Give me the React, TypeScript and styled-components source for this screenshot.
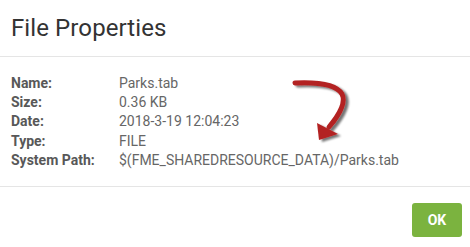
import { Fragment } from 'react';
import styled, { createGlobalStyle } from 'styled-components';

const GlobalStyle = createGlobalStyle`
  html, body {
    margin: 0;
    padding: 0;
    background: #ffffff;
  }
  body {
    font-family: Roboto, 'Liberation Sans', sans-serif;
  }
`;

const Dialog = styled.div`
  width: 470px;
  height: 247px;
  background: #ffffff;
  display: flex;
  flex-direction: column;
`;

const Header = styled.div`
  height: 57px;
  border-bottom: 1px solid #e5e5e5;
  padding: 0 11px;
  display: flex;
  align-items: center;
  box-sizing: border-box;
`;

const Title = styled.h2`
  margin: 0;
  font-size: 24px;
  font-weight: 400;
  color: #333333;
  letter-spacing: 0.1px;
`;

const Body = styled.div`
  position: relative;
  height: 130px;
  padding: 16px 11px 0;
  box-sizing: border-box;
  border-bottom: 1px solid #e5e5e5;
`;

const Table = styled.div`
  display: grid;
  grid-template-columns: 108px 1fr;
  grid-auto-rows: 19.3px;
  font-size: 14px;
  align-items: center;
`;

const Label = styled.div`
  font-weight: 700;
  color: #585858;
`;

const Value = styled.div`
  font-weight: 400;
  color: #666666;
`;

const Arrow = styled.svg`
  position: absolute;
  left: 280px;
  top: 17px;
  overflow: visible;
`;

const Footer = styled.div`
  flex: 1;
  display: flex;
  justify-content: flex-end;
  align-items: flex-start;
  padding: 16px 8px 0 0;
`;

const OkButton = styled.button`
  width: 50px;
  height: 34px;
  border: none;
  border-radius: 3px;
  background: #7bb33f;
  color: #ffffff;
  font-family: Roboto, 'Liberation Sans', sans-serif;
  font-weight: 700;
  font-size: 14px;
  cursor: pointer;
`;

const rows: [string, string][] = [
  ['Name:', 'Parks.tab'],
  ['Size:', '0.36 KB'],
  ['Date:', '2018-3-19 12:04:23'],
  ['Type:', 'FILE'],
  ['System Path:', '$(FME_SHAREDRESOURCE_DATA)/Parks.tab'],
];

export default function App() {
  return (
    <>
      <GlobalStyle />
      <Dialog>
        <Header>
          <Title>File Properties</Title>
        </Header>
        <Body>
          <Table>
            {rows.map(([label, value]) => (
              <Fragment key={label}>
                <Label>{label}</Label>
                <Value>{value}</Value>
              </Fragment>
            ))}
          </Table>
          {/* red callout arrow pointing at the system path */}
          <Arrow width="80" height="75" viewBox="0 0 80 75">
            <defs>
              <filter id="sh" x="-30%" y="-30%" width="160%" height="160%">
                <feGaussianBlur in="SourceAlpha" stdDeviation="1.3" />
                <feOffset dx="2.5" dy="2" />
                <feComponentTransfer result="b">
                  <feFuncA type="linear" slope="0.55" />
                </feComponentTransfer>
                <feMerge>
                  <feMergeNode in="b" />
                  <feMergeNode in="SourceGraphic" />
                </feMerge>
              </filter>
            </defs>
            <g filter="url(#sh)">
              <path
                d="M15 9 C 36 8, 56 10, 62 20 C 66 28, 60 40, 49 53"
                fill="none"
                stroke="#b32424"
                strokeWidth="5"
                strokeLinecap="round"
              />
              <polygon points="37,49 58,60 39,66" fill="#b32424" />
            </g>
          </Arrow>
        </Body>
        <Footer>
          <OkButton>OK</OkButton>
        </Footer>
      </Dialog>
    </>
  );
}
